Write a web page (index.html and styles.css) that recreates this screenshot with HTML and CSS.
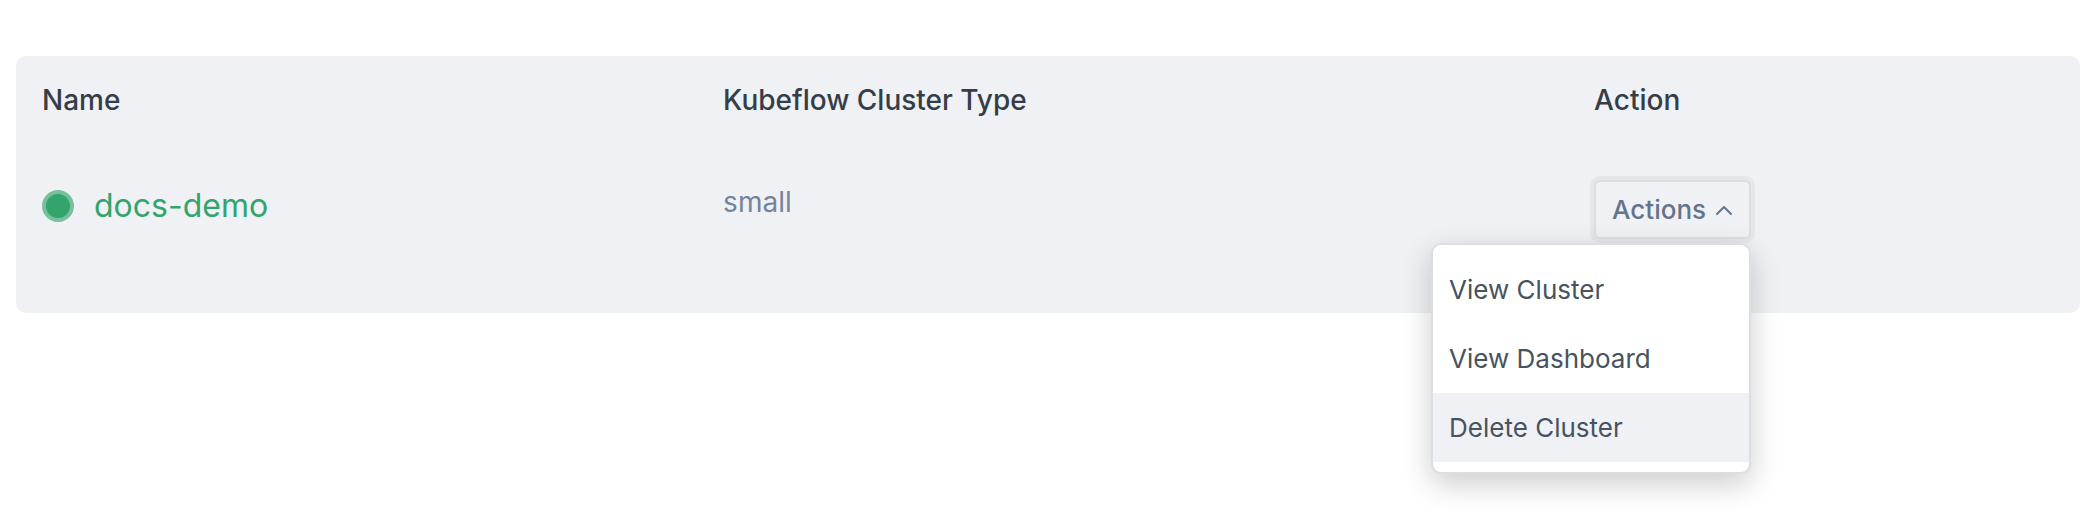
FILE: index.html
```html
<!DOCTYPE html>
<html lang="en">
<head>
<meta charset="utf-8">
<title>Kubeflow Clusters</title>
<link rel="stylesheet" href="styles.css">
</head>
<body>
<main class="page">
  <table class="clusters">
    <thead>
      <tr>
        <th class="col-name" scope="col">Name</th>
        <th class="col-type" scope="col">Kubeflow Cluster Type</th>
        <th class="col-action" scope="col">Action</th>
      </tr>
    </thead>
    <tbody>
      <tr>
        <td><a class="cluster-link" href="#docs-demo"><span class="status"></span>docs-demo</a></td>
        <td class="cluster-type">small</td>
        <td>
          <div class="dropdown">
            <button class="dropdown-toggle" type="button" aria-haspopup="true" aria-expanded="true">
              Actions
              <svg class="chevron" viewBox="0 0 18 12" aria-hidden="true"><path d="M2 10 9 3l7 7"/></svg>
            </button>
            <div class="dropdown-menu">
              <button class="dropdown-item" type="button">View Cluster</button>
              <button class="dropdown-item" type="button">View Dashboard</button>
              <button class="dropdown-item is-active" type="button">Delete Cluster</button>
            </div>
          </div>
        </td>
      </tr>
    </tbody>
  </table>
</main>
</body>
</html>
```
FILE: styles.css
```css
* {
  box-sizing: border-box;
}

body {
  margin: 0;
  background: #fff;
  font-family: Inter, "Liberation Sans", sans-serif;
  font-size: 28px;
  line-height: 36px;
}

.page {
  min-height: 100vh;
  padding: 56px 18px 0 16px;
}

.clusters {
  width: 100%;
  table-layout: fixed;
  border-spacing: 0;
  border-radius: 10px;
  background: #f0f1f5;
}

.col-name {
  width: 33%;
}

.col-type {
  width: 42.2%;
}

th,
td {
  padding: 26px 26px 0;
  text-align: left;
  vertical-align: top;
}

th {
  color: #343e48;
  font-weight: 500;
}

td {
  padding-top: 62px;
  padding-bottom: 74px;
}

.cluster-link {
  display: flex;
  align-items: center;
  gap: 20px;
  padding-top: 6px;
  color: #32a46c;
  font-size: 32px;
  line-height: 40px;
  text-decoration: none;
}

.status {
  width: 32px;
  height: 32px;
  border: 4px solid #76c19b;
  border-radius: 50%;
  background: #32a46c;
}

.cluster-type {
  padding-top: 66px;
  color: #748499;
}

.dropdown {
  position: relative;
  width: fit-content;
}

.dropdown-toggle {
  display: flex;
  align-items: center;
  gap: 9px;
  height: 59px;
  padding: 0 16px;
  border: 2px solid #dcdee6;
  border-radius: 6px;
  background: #f0f1f5;
  box-shadow: 0 0 0 4px #e6e7ec;
  color: #64748b;
  font: 500 26px/36px Inter, "Liberation Sans", sans-serif;
}

.chevron {
  width: 18px;
  height: 12px;
  fill: none;
  stroke: currentColor;
  stroke-width: 2;
  stroke-linecap: round;
  stroke-linejoin: round;
}

.dropdown-menu {
  position: absolute;
  top: 100%;
  right: 0;
  width: 320px;
  margin-top: 4px;
  padding: 10px 0;
  border: 2px solid #dcdee6;
  border-radius: 10px;
  background: #fff;
  box-shadow: 0 10px 30px rgba(0, 0, 0, 0.2);
}

.dropdown-item {
  display: block;
  width: 100%;
  height: 69px;
  padding: 0 16px;
  border: 0;
  background: none;
  color: #475360;
  font: 400 26px/36px Inter, "Liberation Sans", sans-serif;
  text-align: left;
}

.dropdown-item.is-active {
  background: #f0f1f5;
}
```
